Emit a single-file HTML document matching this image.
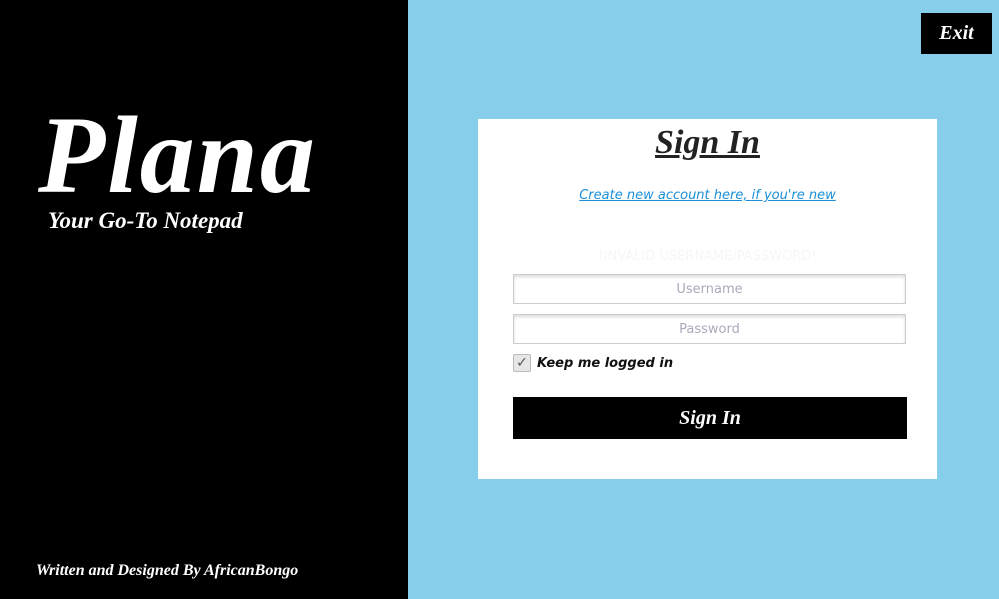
<!DOCTYPE html>
<html><head><style>
*{margin:0;padding:0;box-sizing:border-box}
body{width:999px;height:599px;overflow:hidden;background:#87ceeb;font-family:"DejaVu Sans","Liberation Sans",sans-serif;position:relative}
.left{position:absolute;left:0;top:0;width:408px;height:599px;background:#000;color:#fff}
.script{font-family:"Liberation Serif",serif;font-style:italic;font-weight:bold}
.logo{position:absolute;left:38px;top:100px;font-size:110px;line-height:1;letter-spacing:2px}
.tag{position:absolute;left:48px;top:208px;font-size:23px}
.credit{position:absolute;left:36px;top:562px;font-size:16px}
.exit{position:absolute;left:921px;top:13px;width:71px;height:41px;background:#000;color:#fff;font-size:20px;text-align:center;line-height:41px}
.card{position:absolute;left:478px;top:119px;width:459px;height:360px;background:#fff}
.title{position:absolute;left:0;width:100%;top:2px;text-align:center;font-size:34px;color:#222;text-decoration:underline;line-height:44px}
.link{position:absolute;left:0;width:100%;top:69px;text-align:center;font-size:13px;font-style:italic;color:#1a8fd8;text-decoration:underline}
.err{position:absolute;left:0;width:100%;top:130px;text-align:center;font-size:13px;color:#f6f6f6}
.in{position:absolute;left:35px;width:393px;height:30px;border:1px solid #ccc;box-shadow:inset 0 2px 3px #ddd;text-align:center;font-size:13px;color:#aab;line-height:30px}
.cb{position:absolute;left:35px;top:235px;width:18px;height:18px;border:1px solid #bbb;background:#e6e6e6;border-radius:2px;font-size:14px;line-height:16px;text-align:center;color:#555}
.keep{position:absolute;left:59px;top:237px;font-size:13px;font-weight:bold;font-style:italic;color:#111}
.btn{position:absolute;left:35px;top:278px;width:394px;height:42px;background:#000;color:#fff;text-align:center;line-height:42px;font-size:20px}
</style></head><body>
<div class="left">
<div class="logo script">Plana</div>
<div class="tag script">Your Go-To Notepad</div>
<div class="credit script">Written and Designed By AfricanBongo</div>
</div>
<div class="exit script">Exit</div>
<div class="card">
<div class="title script">Sign In</div>
<div class="link">Create new account here, if you're new</div>
<div class="err">!INVALID USERNAME/PASSWORD!</div>
<div class="in" style="top:155px">Username</div>
<div class="in" style="top:195px">Password</div>
<div class="cb">✓</div>
<div class="keep">Keep me logged in</div>
<div class="btn script">Sign In</div>
</div>
</body></html>
